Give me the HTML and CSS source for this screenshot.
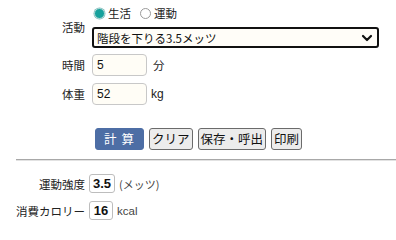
FILE: index.html
```html
<!DOCTYPE html>
<html lang="ja">
<head>
<meta charset="utf-8">
<link rel="stylesheet" href="styles.css">
</head>
<body>
<div class="form">
  <div class="row activity">
    <div class="label">活動</div>
    <div class="content">
      <div class="radios">
        <label class="radio"><input type="radio" name="kind" checked><span>生活</span></label>
        <label class="radio"><input type="radio" name="kind"><span>運動</span></label>
      </div>
      <div class="select-wrap">
        <select class="select"><option>階段を下りる3.5メッツ</option></select>
        <svg class="chev" width="12" height="8" viewBox="0 0 12 8"><path d="M2 2 L6 6 L10 2" fill="none" stroke="#111" stroke-width="2.2" stroke-linecap="round" stroke-linejoin="round"/></svg>
      </div>
    </div>
  </div>
  <div class="row field first">
    <div class="label">時間</div>
    <div class="content"><input class="num" type="text" value="5"><span class="unit">分</span></div>
  </div>
  <div class="row field">
    <div class="label">体重</div>
    <div class="content"><input class="num" type="text" value="52"><span class="unit unit-kg">kg</span></div>
  </div>
  <div class="buttons">
    <button class="btn primary">計 算</button>
    <button class="btn">クリア</button>
    <button class="btn">保存・呼出</button>
    <button class="btn">印刷</button>
  </div>
</div>
<div class="rule"></div>
<div class="results">
  <div class="row result">
    <div class="label">運動強度</div>
    <div class="content"><span class="box box-wide">3.5</span><span class="note">(メッツ)</span></div>
  </div>
  <div class="row result">
    <div class="label">消費カロリー</div>
    <div class="content"><span class="box">16</span><span class="note note-en">kcal</span></div>
  </div>
</div>
</body>
</html>
```
FILE: styles.css
```css
html, body {
  margin: 0;
  padding: 0;
  background: #fff;
}
body {
  font-family: "Noto Sans CJK JP", "Liberation Sans", sans-serif;
  font-size: 12px;
  color: #222;
}
.row {
  display: flex;
  align-items: center;
}
.label {
  width: 85px;
  flex: none;
  text-align: right;
  font-size: 11.5px;
  line-height: 14px;
  color: #222;
}
.content {
  margin-left: 7px;
  display: flex;
  align-items: center;
}
.form {
  padding-top: 6px;
}
.activity .content {
  flex-direction: column;
  align-items: flex-start;
}
.radios {
  display: flex;
  align-items: center;
  height: 14px;
  gap: 9px;
  margin-left: 2px;
}
.radio {
  display: flex;
  align-items: center;
  font-size: 11.5px;
  line-height: 14px;
  gap: 3px;
}
.radio input {
  appearance: none;
  -webkit-appearance: none;
  margin: 0;
  width: 11px;
  height: 11px;
  border-radius: 50%;
  border: 1px solid #9a9a9a;
  background: #fff;
  box-sizing: border-box;
}
.radio input:checked {
  background: #17a19c;
  border-color: #b9d9d8;
  box-shadow: 0 0 0 0.5px #7fbfbd;
}
.select-wrap {
  position: relative;
  margin-top: 7px;
}
.select {
  appearance: none;
  -webkit-appearance: none;
  width: 287px;
  height: 21px;
  box-sizing: border-box;
  border: 2px solid #111;
  border-radius: 3px;
  background: #fffdf8;
  font-family: "Noto Sans CJK JP", "Liberation Sans", sans-serif;
  font-size: 11.5px;
  padding: 0 3px;
  color: #111;
  margin: 0;
}
.chev {
  position: absolute;
  right: 6px;
  top: 7px;
}
.field.first {
  margin-top: 6px;
}
.field {
  height: 22px;
  margin-top: 7px;
}
.num {
  width: 55px;
  height: 22px;
  box-sizing: border-box;
  border: 1px solid #c8c8c8;
  border-radius: 4px;
  background: #fffdf6;
  font-family: "Liberation Sans", sans-serif;
  font-size: 12px;
  padding: 0 4px;
  margin: 0;
  color: #111;
}
.unit {
  margin-left: 6px;
  font-size: 11.5px;
}
.unit-kg {
  margin-left: 4px;
  font-family: "Liberation Sans", sans-serif;
  font-size: 12px;
}
.buttons {
  display: flex;
  gap: 5px;
  margin-top: 23px;
  padding-left: 95px;
}
.btn {
  height: 22px;
  box-sizing: border-box;
  border: 1px solid #6b6b6b;
  border-radius: 3px;
  background: #ececec;
  font-family: "Noto Sans CJK JP", "Liberation Sans", sans-serif;
  font-size: 12.5px;
  line-height: 1;
  padding: 0 2px;
  color: #111;
  margin: 0;
}
.btn.primary {
  width: 49px;
  background: #4d6ea5;
  border-color: #4d6ea5;
  color: #fff;
  font-size: 12.5px;
  letter-spacing: 1px;
}
.rule {
  margin: 9px 0 0 16px;
  height: 1px;
  background: #a8a8a8;
  border-bottom: 1px solid #e2e2e2;
}
.results {
  padding-top: 13px;
}
.result {
  height: 19px;
  margin-bottom: 8px;
}
.result .content {
  margin-left: 4px;
}
.box {
  display: inline-flex;
  align-items: center;
  justify-content: center;
  width: 24px;
  height: 19px;
  box-sizing: border-box;
  border: 1px solid #bdbdbd;
  border-radius: 3px;
  font-family: "Liberation Sans", sans-serif;
  font-weight: bold;
  font-size: 13px;
  color: #111;
}
.box-wide {
  width: 26px;
}
.note {
  margin-left: 4px;
  font-size: 11px;
  color: #444;
}
.note-en {
  font-family: "Liberation Sans", sans-serif;
  font-size: 11.5px;
}
```
